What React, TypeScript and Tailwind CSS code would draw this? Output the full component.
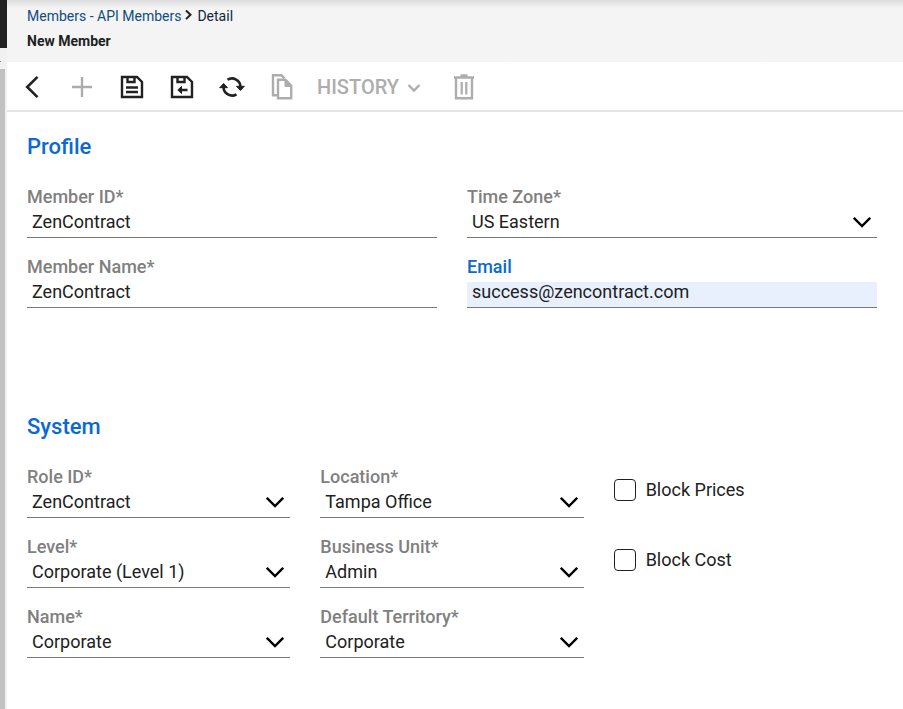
import { ReactNode, useState } from "react";

type FieldProps = {
    id: string
    label: string
    value: string
}

const initialForm = {
    memberId: 'ZenContract',
    memberName: 'ZenContract',
    email: 'success@zencontract.com',
}

export default function MemberDetailPage() {
    const [form, setForm] = useState(initialForm)

    return (
        <div className="flex min-h-screen bg-white font-['Roboto',sans-serif] text-[#212121]">
            <SideStrip />
            <div className="min-w-0 flex-1">
                <header className="h-[62px] bg-gradient-to-b from-[#dcdcdc] via-[#f4f4f4] via-[8px] to-[#f4f4f4] pl-5 pt-1.5">
                    <nav aria-label="Breadcrumb" className="flex h-5 items-center text-[14px] leading-5">
                        <a href="#members" className="text-[#0f4c81]">Members - API Members</a>
                        <svg className="mx-[3px] mb-0.5 h-3 w-2.5" viewBox="0 0 10 12" fill="none" stroke="#212121" strokeWidth="2">
                            <path d="M2 1.500l4.500 4.300L2 10.100" />
                        </svg>
                        <span className="text-[#10253f]">Detail</span>
                    </nav>
                    <h1 className="mt-[5px] text-[14px] font-bold leading-5">New Member</h1>
                </header>

                <Toolbar />

                <main className="pl-5 pr-[26px]">
                    <Section title="Profile">
                        <div className="grid grid-cols-2 gap-x-[30px] gap-y-[19px]">
                            <TextField id="memberId" label="Member ID*" value={form.memberId} onChange={(memberId) => setForm({ ...form, memberId })} />
                            <SelectField id="timeZone" label="Time Zone*" value="US Eastern" />
                            <TextField id="memberName" label="Member Name*" value={form.memberName} onChange={(memberName) => setForm({ ...form, memberName })} />
                            <TextField id="email" label="Email" value={form.email} highlighted onChange={(email) => setForm({ ...form, email })} />
                        </div>
                    </Section>

                    <Section title="System">
                        <div className="grid grid-cols-3 gap-x-[30px] gap-y-[19px]">
                            <SelectField id="roleId" label="Role ID*" value="ZenContract" />
                            <SelectField id="location" label="Location*" value="Tampa Office" />
                            <CheckField id="blockPrices" label="Block Prices" />
                            <SelectField id="level" label="Level*" value="Corporate (Level 1)" />
                            <SelectField id="businessUnit" label="Business Unit*" value="Admin" />
                            <CheckField id="blockCost" label="Block Cost" />
                            <SelectField id="name" label="Name*" value="Corporate" />
                            <SelectField id="territory" label="Default Territory*" value="Corporate" />
                        </div>
                    </Section>
                </main>
            </div>
        </div>
    )
}

// edge of the navigation menu with its scrollbar
function SideStrip() {
    return (
        <div className="flex w-[7px] shrink-0 flex-col bg-[#f1f1f1]">
            <div className="h-12 bg-[#212121]" />
            <div className="mt-[13px] h-px w-px bg-[#8a8a8a]" />
            <div className="mt-[7px] w-[5px] flex-1 bg-[#c1c1c1]" />
        </div>
    )
}

function Toolbar() {
    return (
        <div role="toolbar" className="flex h-[50px] items-center border-b-2 border-[#e4e4e4] pt-0.5 text-[#212121]">
            <ToolButton label="Back">
                <path d="M19.500 3.800L9.200 14l10.300 10.200" strokeWidth="2.600" />
            </ToolButton>
            <ToolButton label="New" disabled>
                <path d="M14 4v20M4 14h20" strokeWidth="2.400" />
            </ToolButton>
            <ToolButton label="Save">
                <path d="M4 4h15L24 9v15H4zM9.500 4v5h7V4M8 14.500h12M8 19h12" strokeWidth="2.400" />
            </ToolButton>
            <ToolButton label="Save and close">
                <path d="M4 4h15L24 9v15H4zM9.500 4v5h7V4M19.500 17h-8" strokeWidth="2.400" />
                <path d="M13.500 13.500v7L9.800 17z" fill="currentColor" strokeWidth="1" />
            </ToolButton>
            <ToolButton label="Refresh">
                <path d="M9.500 6.700A8.600 8.600 0 0 1 22.500 14M18.500 21.300A8.600 8.600 0 0 1 5.500 14" strokeWidth="2.600" />
                <path d="M18.500 13.300l3.900 4.200 3.900-4.200zM1.700 14.700l3.900-4.200 3.900 4.200z" fill="currentColor" strokeWidth="1" />
            </ToolButton>
            <ToolButton label="Copy" disabled>
                <path d="M9.500 22.300H5V2.300h8.500l3 3" strokeWidth="2.400" />
                <path d="M10 6.800h7.500l5.700 6v12.500H10z" strokeWidth="2.400" />
                <path d="M17 6.800l6.200 6.700H17z" fill="currentColor" />
            </ToolButton>
            <button type="button" disabled className="flex h-12 items-center pl-2.5 text-[20px] font-medium leading-6 text-[#adadad]">
                HISTORY
                <svg className="ml-[7px] h-4 w-4" viewBox="0 0 16 16" fill="none" stroke="currentColor" strokeWidth="2.400">
                    <path d="M2.500 6L8 11.500 13.500 6" />
                </svg>
            </button>
            <div className="pl-[17px]">
                <ToolButton label="Delete" disabled>
                    <path d="M4 4.500h20M10.500 2.500h7M6 5v20.200h16V5" strokeWidth="2.400" />
                    <path d="M11.700 9V21.500M16.300 9V21.500" strokeWidth="2.200" />
                </ToolButton>
            </div>
        </div>
    )
}

function ToolButton({ label, disabled, children }: { label: string, disabled?: boolean, children: ReactNode }) {
    return (
        <button type="button" aria-label={label} disabled={disabled} className="flex h-12 w-[50px] items-center justify-center disabled:text-[#adadad]">
            <svg className="h-7 w-7" viewBox="0 0 28 28" fill="none" stroke="currentColor">
                {children}
            </svg>
        </button>
    )
}

function Section({ title, children }: { title: string, children: ReactNode }) {
    return (
        <section className="min-h-[280px] pt-[21px]">
            <h2 className="mb-[26px] text-[22px] font-medium leading-7 text-[#0b69d1]">{title}</h2>
            {children}
        </section>
    )
}

function TextField({ id, label, value, highlighted, onChange }: FieldProps & { highlighted?: boolean, onChange: (value: string) => void }) {
    return (
        <div>
            <label htmlFor={id} className={`mb-[5px] block text-[18px] font-medium leading-5 ${highlighted ? 'text-[#0b69d1]' : 'text-[#808080]'}`}>{label}</label>
            <input
                id={id}
                name={id}
                value={value}
                onChange={(e) => onChange(e.target.value)}
                className={`block h-[26px] w-full border-b border-[#7a7a7a] px-[5px] pb-1.5 text-[18px] leading-5 outline-none ${highlighted ? 'bg-[#e8f0fe]' : 'bg-white'}`}
            />
        </div>
    )
}

function SelectField({ id, label, value }: FieldProps) {
    return (
        <div>
            <label htmlFor={id} className="mb-[5px] block text-[18px] font-medium leading-5 text-[#808080]">{label}</label>
            <div className="relative">
                <select id={id} name={id} defaultValue={value} className="block h-[26px] w-full appearance-none border-b border-[#7a7a7a] bg-white pb-[5px] pl-[5px] pr-8 text-[18px] leading-5 outline-none">
                    <option>{value}</option>
                </select>
                <svg className="pointer-events-none absolute right-1.5 top-0.5 h-4 w-[18px]" viewBox="0 0 18 16" fill="none" stroke="#000" strokeWidth="2.400">
                    <path d="M.8 3.800L9 12l8.200-8.200" />
                </svg>
            </div>
        </div>
    )
}

function CheckField({ id, label }: { id: string, label: string }) {
    return (
        <div className="flex items-center pb-1.5">
            <input id={id} name={id} type="checkbox" className="h-[22px] w-[22px] appearance-none rounded-[4px] border border-[#212121] bg-white checked:bg-[#0b69d1]" />
            <label htmlFor={id} className="pl-2.5 text-[18px] leading-5">{label}</label>
        </div>
    )
}
